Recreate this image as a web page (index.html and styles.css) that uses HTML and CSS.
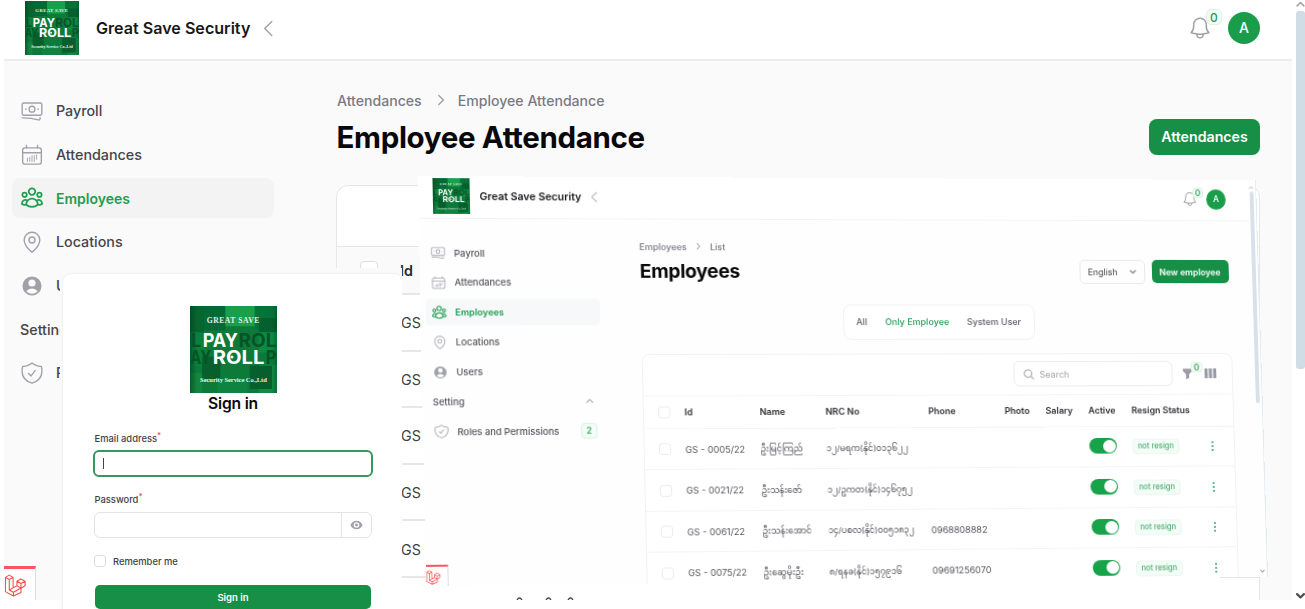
FILE: index.html
```
<!DOCTYPE html>
<html lang="en">
<head>
<meta charset="utf-8">
<title>Great Save Security</title>
<link rel="stylesheet" href="styles.css">
</head>
<body>
<svg class="defs" aria-hidden="true">
  <defs>
    <linearGradient id="edge" x1="0" x2="1" y1="0" y2="0">
      <stop offset="0" stop-color="#023f1f" stop-opacity=".6"/><stop offset=".08" stop-color="#023f1f" stop-opacity="0"/>
      <stop offset=".94" stop-color="#023f1f" stop-opacity="0"/><stop offset="1" stop-color="#023f1f" stop-opacity=".4"/>
    </linearGradient>
  </defs>
  <symbol id="logo" viewBox="0 0 86 86">
    <rect width="86" height="86" fill="#0e7a3a"/>
    <rect width="14" height="26" fill="#07652f"/><rect x="14" width="21" height="24" fill="#036a35"/>
    <rect x="35" width="29" height="20" fill="#1b9f4b"/><rect x="64" width="22" height="23" fill="#067438"/>
    <rect x="68" y="12" width="18" height="14" fill="#04602e"/><rect y="26" width="13" height="34" fill="#0b7f3c"/>
    <rect x="68" y="26" width="18" height="20" fill="#0b8a42"/><rect x="68" y="58" width="18" height="28" fill="#118b42"/>
    <rect x="12" y="50" width="18" height="22" fill="#075f2d"/><rect x="59" y="59" width="22" height="23" fill="#075f2e"/>
    <rect y="66" width="12" height="20" fill="#14853f"/><rect x="27" y="72" width="30" height="14" fill="#0f8340"/>
    <rect width="86" height="86" fill="url(#edge)"/>
    <g font-family="Inter, sans-serif" font-weight="700" font-size="19">
      <g fill="#055427"><text x="1" y="41" textLength="10" lengthAdjust="spacingAndGlyphs">L</text><text x="48" y="41" textLength="37.500" lengthAdjust="spacingAndGlyphs">ROL</text>
      <text x="0" y="57.500" textLength="21" lengthAdjust="spacingAndGlyphs">AY</text><text x="75" y="57.500" textLength="10.500" lengthAdjust="spacingAndGlyphs">P</text></g>
      <g fill="#fff"><text x="12.500" y="41" textLength="35" lengthAdjust="spacingAndGlyphs">PAY</text>
      <text x="22.500" y="57.500" textLength="51" lengthAdjust="spacingAndGlyphs">ROLL</text></g>
    </g>
    <circle cx="41.500" cy="50.500" r="1.500" fill="#fff"/>
    <g font-family="Liberation Serif, serif" font-weight="700" fill="#e3f1e6">
      <text x="16.500" y="17" font-size="7.500" textLength="52">GREAT SAVE</text>
      <text x="10" y="75.500" font-size="6.500" textLength="66">Security Service Co.,Ltd</text>
    </g>
  </symbol>
  <symbol id="cash" viewBox="0 0 24 24"><rect x="1.300" y="3.300" width="21.400" height="13.400" rx="1.600"/><circle cx="12" cy="10" r="3.200"/><path d="M5 10h.6M18.400 10h.6M1.500 19.500c6 0 12 .6 17.500 2.200 1 .3 1.800-.4 1.800-1.400v-1"/></symbol>
  <symbol id="cal" viewBox="0 0 24 24"><rect x="1.800" y="4.200" width="20.400" height="17.800" rx="2.500"/><path d="M1.800 9.500h20.400M6 1.500v2.700M18 1.500v2.700"/><path stroke-width="1" d="M7 15.500V19M9.500 14.500V19M12 13V19M14.500 12.500V19M17 12v4.500"/></symbol>
  <symbol id="group" viewBox="0 0 24 24"><circle cx="12" cy="5" r="3.600"/><circle cx="3.900" cy="8.500" r="2.400"/><circle cx="20.100" cy="8.500" r="2.400"/><path d="M5.600 19.300C5.600 15.500 8.400 12.700 12 12.700s6.400 2.800 6.400 6.600c-3.800 3-9 3-12.800 0ZM6 14.200c-2.600-.8-5 1-5 4.300 1.300.8 3 1 4.600.8M18 14.200c2.600-.8 5 1 5 4.300-1.300.8-3 1-4.600.8"/></symbol>
  <symbol id="pin" viewBox="0 0 24 24"><circle cx="12" cy="9.800" r="3.300"/><path d="M20.500 9.800C20.500 17 12 23 12 23S3.500 17 3.500 9.800a8.500 8.500 0 0 1 17 0Z"/></symbol>
  <symbol id="user" viewBox="0 0 24 24"><path fill="currentColor" stroke="none" fill-rule="evenodd" d="M12 1.600a10.400 10.400 0 1 0 0 20.800A10.400 10.400 0 0 0 12 1.600Zm0 3.200a3.900 3.900 0 1 1 0 7.800 3.900 3.900 0 0 1 0-7.800ZM5.800 18a7.500 7.500 0 0 1 12.400 0 9 9 0 0 1-12.400 0Z"/></symbol>
  <symbol id="shield" viewBox="0 0 24 24"><path d="m8.300 12.500 2.700 2.700 4.500-6M12 1.200c-3 2.600-6.300 3.700-10.200 3.600C-.2 13.500 3 20.300 12 23c9-2.700 12.200-9.500 10.200-18.200C18.300 4.900 15 3.800 12 1.200Z"/></symbol>
  <symbol id="bell" viewBox="0 0 24 24"><path d="M14.900 18.100a26 26 0 0 0 6-1.300A9 9 0 0 1 18.300 10V8.500a6.300 6.300 0 0 0-12.600 0V10a9 9 0 0 1-2.600 6.800c2 .7 4 1.100 6 1.300m5.800 0a24.300 24.300 0 0 1-5.800 0m5.800 0a3 3 0 1 1-5.800 0"/></symbol>
  <symbol id="left" viewBox="0 0 10 18"><path d="M9 1.500 1.500 9 9 16.500"/></symbol>
  <symbol id="right" viewBox="0 0 8 12"><path d="m1.800 1.500 4.600 4.500-4.600 4.500"/></symbol>
  <symbol id="up" viewBox="0 0 12 8"><path d="M1.500 6.500 6 2l4.500 4.500"/></symbol>
  <symbol id="down" viewBox="0 0 12 8"><path d="M1.500 1.500 6 6l4.500-4.500"/></symbol>
  <symbol id="laravel" viewBox="0 0 24 24"><path d="M1.500 3.500 5.500 1.200 9.500 3.500v11l4-2.300V7.500L17.500 5.200l4.500 2.300v4.800l-4.300 2.500v4.600L9.800 23l-8.300-4.600ZM1.500 3.500l4 2.300 4-2.300M5.500 5.800v10.900l4.300 2.300 7.900-4.300-4.200-2.500M9.500 14.500l-4 2.200M9.800 19v4M13.500 7.500l4.200 2.400L22 7.500M17.700 9.900v4.900"/></symbol>
</svg>

<div class="stage">
  <div class="app">
    <header class="top">
      <svg class="brand"><use href="#logo"/></svg>
      <span class="site">Great Save Security</span>
      <svg class="ic back"><use href="#left"/></svg>
      <span class="grow"></span>
      <span class="notify"><svg class="ic bell"><use href="#bell"/></svg><b class="count">0</b></span>
      <span class="avatar">A</span>
    </header>
    <div class="body">
      <nav class="side">
        <a class="item"><svg class="ic"><use href="#cash"/></svg>Payroll</a>
        <a class="item"><svg class="ic"><use href="#cal"/></svg>Attendances</a>
        <a class="item on"><svg class="ic"><use href="#group"/></svg>Employees</a>
        <a class="item"><svg class="ic"><use href="#pin"/></svg>Locations</a>
        <a class="item"><svg class="ic"><use href="#user"/></svg>Users</a>
        <a class="item head">Setting</a>
        <a class="item"><svg class="ic"><use href="#shield"/></svg>Roles</a>
      </nav>
      <main class="content">
        <div class="crumbs">Attendances<svg class="ic"><use href="#right"/></svg>Employee Attendance</div>
        <div class="titlebar"><h1>Employee Attendance</h1><button class="btn">Attendances</button></div>
        <section class="sheet">
          <div class="tools"></div>
          <div class="line hd"><i class="box"></i><span class="id">Id</span><span class="last">e</span></div>
          <div class="line"><span class="id">GS -</span></div>
          <div class="line"><span class="id">GS -</span></div>
          <div class="line"><span class="id">GS -</span></div>
          <div class="line"><span class="id">GS -</span></div>
          <div class="line"><span class="id">GS -</span></div>
          <svg class="tops" viewBox="0 0 60 3"><path d="M1 3q2.500-4 5 0M30 3q2.500-4 5 0M52 3q2.500-4 5 0"/></svg>
        </section>
      </main>
    </div>
  </div>
  <div class="track"><svg class="ic arrow"><use href="#up"/></svg><i class="thumb"></i><span class="grow"></span><svg class="ic arrow dark"><use href="#down"/></svg></div>
  <div class="debug"><svg><use href="#laravel"/></svg></div>

  <div class="login">
    <form class="card">
      <svg class="mark"><use href="#logo"/></svg>
      <h2>Sign in</h2>
      <label>Email address<sup>*</sup></label>
      <div class="field focus"><i class="caret"></i></div>
      <label>Password<sup>*</sup></label>
      <div class="field"><span class="grow"></span><span class="eye"><svg viewBox="0 0 14 10"><path fill-rule="evenodd" d="M7 .3C3.800.3 1.500 2.300.5 5c1 2.700 3.300 4.700 6.500 4.700s5.500-2 6.500-4.700C12.500 2.300 10.200.3 7 .3Zm0 1.700a3 3 0 1 1 0 6 3 3 0 0 1 0-6Z"/><circle cx="7" cy="5" r="1.600"/></svg></span></div>
      <div class="remember"><i class="box"></i>Remember me</div>
      <button class="submit" type="button">Sign in</button>
    </form>
  </div>

  <div class="app small">
    <header class="top">
      <svg class="brand"><use href="#logo"/></svg>
      <span class="site">Great Save Security</span>
      <svg class="ic back"><use href="#left"/></svg>
      <span class="grow"></span>
      <span class="notify"><svg class="ic bell"><use href="#bell"/></svg><b class="count">0</b></span>
      <span class="avatar">A</span>
    </header>
    <div class="body">
      <nav class="side">
        <a class="item"><svg class="ic"><use href="#cash"/></svg>Payroll</a>
        <a class="item"><svg class="ic"><use href="#cal"/></svg>Attendances</a>
        <a class="item on"><svg class="ic"><use href="#group"/></svg>Employees</a>
        <a class="item"><svg class="ic"><use href="#pin"/></svg>Locations</a>
        <a class="item"><svg class="ic"><use href="#user"/></svg>Users</a>
        <a class="item head">Setting<span class="grow"></span><svg class="ic fold"><use href="#up"/></svg></a>
        <a class="item">
          <svg class="ic"><use href="#shield"/></svg>Roles and Permissions<span class="grow"></span><b class="num">2</b></a>
      </nav>
      <main class="content">
        <div class="crumbs">Employees<svg class="ic"><use href="#right"/></svg>List</div>
        <div class="titlebar"><h1>Employees</h1><span class="grow"></span><span class="select">English<svg class="ic"><use href="#down"/></svg></span><button class="btn">New employee</button></div>
        <div class="tabs"><span>All</span><span class="cur">Only Employee</span><span>System User</span></div>
        <section class="sheet">
          <div class="tools">
            <span class="search"><svg class="ic" viewBox="0 0 14 14"><circle cx="6" cy="6" r="4.800"/><path d="m9.600 9.600 3.400 3.400"/></svg>Search</span>
            <span class="filter"><svg viewBox="0 0 12 13"><path d="M.8.8h10.400v2.400L7.700 7v4L4.300 12.800V7L.8 3.200Z"/></svg><b class="count">0</b></span>
            <svg class="cols" viewBox="0 0 12 10"><path d="M0 0h3.200v10H0zM4.400 0h3.200v10H4.400zM8.800 0H12v10H8.800z"/></svg>
          </div>
          <div class="row th"><i class="box"></i><span>Id</span><span>Name</span><span>NRC No</span><span>Phone</span><span>Photo</span><span>Salary</span><span>Active</span><span>Resign Status</span></div>
          <div class="row"><i class="box"></i><span>GS - 0005/22</span><span class="my">ဦးမြင့်ကြည်</span><span class="my nrc">၁၂/မရက(နိုင်)၀၁၃၆၂၂</span><span></span><span></span><span></span><i class="toggle"></i><em>not resign</em><i class="dots"></i></div>
          <div class="row"><i class="box"></i><span>GS - 0021/22</span><span class="my">ဦးသန်းဇော်</span><span class="my nrc">၁၂/ဥကတ(နိုင်)၁၄၆၇၅၂</span><span></span><span></span><span></span><i class="toggle"></i><em>not resign</em><i class="dots"></i></div>
          <div class="row"><i class="box"></i><span>GS - 0061/22</span><span class="my">ဦးသန်းအောင်</span><span class="my nrc">၁၄/ပစလ(နိုင်)၀၀၅၁၈၃၂</span><span>0968808882</span><span></span><span></span><i class="toggle"></i><em>not resign</em><i class="dots"></i></div>
          <div class="row"><i class="box"></i><span>GS - 0075/22</span><span class="my">ဦးဆွေမိုးဦး</span><span class="my nrc">၈/ရနခ(နိုင်)၁၅၇၉၁၆</span><span>09691256070</span><span></span><span></span><i class="toggle"></i><em>not resign</em><i class="dots"></i></div>
        </section>
      </main>
      <div class="track"><svg class="ic arrow"><use href="#up"/></svg><i class="thumb"></i><span class="grow"></span><svg class="ic arrow dark"><use href="#down"/></svg></div>
    </div>
    <div class="debug"><svg><use href="#laravel"/></svg></div>
  </div>
</div>
</body>
</html>
```
FILE: styles.css
```
* { box-sizing: border-box; }
body { margin: 0; background: #fff; font-family: Inter, "Noto Sans", sans-serif; overflow: hidden; }
h1, h2 { margin: 0; }
button { border: 0; font-family: inherit; }
.defs { position: absolute; width: 0; height: 0; }
.stage { position: relative; width: 1305px; height: 609px; overflow: hidden; }
.grow { flex: 1; }
.ic { fill: none; stroke: #a1a1aa; stroke-width: 1.5; stroke-linecap: round; stroke-linejoin: round; color: #a1a1aa; flex: none; overflow: visible; }

/* application frame */
.app { margin-left: 4px; width: 1288px; height: 600px; background: #fafafa; overflow: hidden; }
.top { display: flex; align-items: center; height: 61px; padding: 0 32px 3px 21px; background: #fff; border-bottom: 2px solid #ececee; }
.brand { width: 54px; height: 54px; flex: none; }
.site { margin-left: 17px; font-size: 16.1px; font-weight: 600; color: #18181b; white-space: nowrap; }
.back { width: 10px; height: 17px; margin-left: 13px; }
.notify { display: flex; position: relative; margin-right: 16px; }
.bell { width: 24px; height: 24px; }
.count { position: absolute; left: 18px; top: -6px; padding: 0 3px; height: 16px; line-height: 15px; border: 1px solid #e0f2e7; border-radius: 5px; background: #f1faf4; color: #2c9c58; font-size: 12px; font-weight: 500; }
.notify > .count { top: -7px; }
.avatar { width: 32px; height: 32px; border-radius: 50%; background: #1a9d4b; color: #fff; font-size: 14px; font-weight: 500; line-height: 32px; text-align: center; }
.body { display: flex; }
.side { flex: none; width: 270px; margin: 30px 0 0 8px; }
.item { display: flex; align-items: center; width: 262px; height: 39.7px; margin-bottom: 4px; padding-left: 9px; border-radius: 8px; font-size: 14.3px; font-weight: 500; color: #45454c; white-space: nowrap; }
.item .ic { width: 22px; height: 22px; margin-right: 13px; }
.item.head { padding-left: 8px; }
.item.on { background: #f3f3f4; color: #1f9d50; font-size: 14px; font-weight: 600; }
.item.on .ic { stroke: #1f9d50; stroke-width: 1.9; }
.content { width: 924px; margin: 29px 0 0 54px; }
.crumbs { display: flex; align-items: center; height: 20px; margin-left: 1px; font-size: 14.1px; font-weight: 500; color: #7a7a83; }
.crumbs .ic { width: 8px; height: 12px; margin: 0 13px 0 15px; }
.titlebar { display: flex; align-items: center; justify-content: space-between; margin-top: 8px; height: 38px; }
.titlebar h1 { margin-left: .5px; font-size: 29.5px; font-weight: 700; letter-spacing: -.34px; color: #09090b; }
.btn { height: 36px; width: 111px; padding: 0 0 2px; border-radius: 8px; background: #178f46; color: #fff; font-size: 14.2px; font-weight: 600; white-space: nowrap; }
.sheet { height: 450px; margin-top: 29px; border: 1px solid #e7e7e9; border-radius: 12px; background: #fff; overflow: hidden; }
.tools { height: 60px; }
.line { display: flex; align-items: center; height: 56.6px; padding: 1px 0 0 64px; border-bottom: 2px solid #e7e7e9; font-size: 14.3px; color: #3f3f46; }
.line.hd { height: 49px; padding: 0 0 0 23px; border-top: 1px solid #e7e7e9; background: #fafafa; font-weight: 600; color: #27272a; }
.box { flex: none; width: 18px; height: 18px; border: 1px solid #dedee1; border-radius: 4px; background: #fff; }
.hd .id { margin-left: 22px; }
.last { margin: 0 1px 0 auto; }
.tops { display: block; width: 60px; height: 3px; margin: 19px 0 0 179px; fill: none; stroke: #444; stroke-width: 1.3; }

.stage > .track { position: absolute; left: 1296px; top: 0; width: 9px; height: 600px; overflow: hidden; }
.track { display: flex; flex-direction: column; }
.arrow { width: 9px; height: 8px; stroke-width: 2; }
.arrow.dark { stroke: #505050; stroke-width: 3; }
.thumb { margin-top: 3px; height: 358px; border-radius: 3px; background: #d0dce6; }
.debug { position: absolute; left: 4px; top: 566px; width: 32px; height: 34px; border-top: 3px solid #fb5560; border-right: 1px solid #ddd; background: #fff; }
.debug svg { display: block; width: 23px; height: 23px; margin-top: 5px; fill: none; stroke: #fb4b46; stroke-width: 1.1; stroke-linejoin: round; }

/* sign-in window */
.login { position: absolute; left: 60px; top: 268px; width: 342px; height: 341px; padding: 6px 0 0 3px; background: #fafafa; overflow: hidden; }
.card { display: flex; flex-direction: column; height: 350px; padding: 32px 30px 0 31px; border-radius: 8px; background: #fff; box-shadow: 0 0 2px #ddd; color: #3f3f46; font-size: 9.400px; font-weight: 500; }
.mark { width: 87px; height: 87px; align-self: center; }
.card h2 { height: 21px; line-height: 21px; text-align: center; font-size: 15.700px; font-weight: 600; letter-spacing: -.2px; color: #09090b; }
.card label { height: 16px; margin-top: 17px; padding-left: .5px; line-height: 16px; }
.card sup { color: #ef4444; font-size: 8px; line-height: 0; }
.field { display: flex; height: 26px; margin-top: 4px; border: 1px solid #e4e4e7; border-radius: 6px; }
.field.focus { height: 27px; margin: 3px -1px 0; border: 2px solid #35985c; }
.caret { width: 1px; height: 11px; margin: 6px 0 0 8px; background: #444; }
.card .focus + label { margin-top: 15px; }
.eye { display: flex; align-items: center; justify-content: center; width: 30px; border-left: 1px solid #e4e4e7; }
.eye svg { width: 13px; height: 10px; fill: #a1a1aa; }
.remember { display: flex; align-items: center; gap: 7px; height: 14px; margin-top: 16px; }
.remember .box { width: 12px; height: 12px; border-radius: 3px; }
.submit { flex: none; height: 24px; margin: 17px 1px 0; border-radius: 5px; background: #178f46; color: #fff; font-size: 9.500px; font-weight: 600; }

/* employees window, seen in slight perspective */
.app.small { position: absolute; left: 418px; top: 176px; width: 840px; height: 410px; margin: 0; background: #fefefe; border-right: 1px solid #e2ebf2; transform-origin: 0 0; transform: matrix3d(1.030168, .0049173, 0, .000038842, .01941, .994784, 0, -.000012721, 0, 0, 1, 0, 0, 0, 0, 1); }
.small .ic { stroke-width: 1.400; }
.small .top { height: 43px; width: 831px; padding: 0 23px 1.500px 13.500px; border-bottom: 1.500px solid #f0f3f5; }
.small .brand { width: 36px; height: 36px; }
.small .site { margin-left: 10px; font-size: 10.400px; }
.small .back { width: 7px; height: 11px; margin-left: 8.500px; }
.small .bell { width: 16px; height: 16px; }
.small .notify { margin-right: 9.500px; }
.small .count { left: 11px; top: -4px; height: 11px; padding: 0 2px; line-height: 10px; border-radius: 3px; font-size: 9px; }
.small .avatar { width: 20px; height: 21px; line-height: 21px; font-size: 8.500px; }
.small .side { width: 173px; margin: 20.500px 0 0 5px; }
.small .item { width: 170px; height: 27px; margin-bottom: 2.900px; padding-left: 6px; border-radius: 5px; font-size: 9.200px; color: #52525b; }
.small .item .ic { width: 14px; height: 14px; margin-right: 8.500px; }
.small .item.head { padding-left: 5px; padding-right: 8px; }
.small .item .fold { width: 8px; height: 6px; margin: 0; }
.small .item.on { background: #f7f8fa; color: #1f9d50; font-size: 9px; }
.small .item.on .ic { stroke: #27a158; }
.num { width: 16px; height: 16px; margin-right: 5px; border: 1px solid #dcf3e5; border-radius: 4px; background: #f3fcf7; color: #40ac6b; font-size: 8.500px; font-weight: 600; line-height: 14px; text-align: center; }
.small .content { width: 595px; margin: 20px 0 0 37px; }
.small .crumbs { height: 14px; margin-left: 0; font-size: 9px; }
.small .crumbs .ic { width: 5px; height: 8px; margin: 0 9px 0 9px; }
.small .titlebar { margin-top: 5px; height: 26px; }
.small .titlebar h1 { margin-left: 0; font-size: 19px; letter-spacing: -.3px; }
.select { display: flex; align-items: center; justify-content: space-between; width: 67px; height: 25px; margin-right: 7px; padding: 0 8px; border: 1px solid #e9e9ec; border-radius: 5px; font-size: 8.900px; color: #3f3f46; }
.select .ic { width: 7px; height: 5px; stroke: #6b6b80; stroke-width: 2; }
.small .btn { width: 79px; height: 24.500px; margin-right: 1.500px; padding: 0; border-radius: 5px; font-size: 8.800px; }
.tabs { display: flex; align-items: center; justify-content: center; gap: 18px; width: 193px; height: 36px; margin: 20.500px 0 0 200.500px; border: 1px solid #f1f1f3; border-radius: 8px; background: #fff; font-size: 9px; font-weight: 500; color: #5f5f68; white-space: nowrap; }
.cur { color: #2b9f58; }
.small .sheet { height: 240px; margin-top: 14.500px; border-color: #f1f2f4; border-radius: 8px 8px 0 0; }
.small .tools { display: flex; align-items: center; height: 40.500px; padding-left: 369.500px; color: #a1a1aa; font-size: 9px; }
.search { display: flex; align-items: center; gap: 6px; width: 162px; height: 26px; padding-left: 9px; border: 1px solid #ececef; border-radius: 6px; }
.search .ic { width: 11px; height: 11px; }
.filter { display: flex; position: relative; margin: 0 12px 0 10.500px; }
.small .filter .count { left: 9px; top: -6px; }
.filter svg { width: 11px; height: 13px; fill: #9b9ba5; }
.cols { width: 12px; height: 10px; fill: #9b9ba5; }
.row { display: grid; grid-template-columns: 26px 74.500px 65.500px 103px 77px 41.500px 43.500px 44px 79px 10px; align-items: center; height: 41.400px; padding: .5px 0 0 14px; border-top: 1.500px solid #f3f4f6; font-size: 9.100px; color: #52525b; white-space: nowrap; }
.row.th { height: 33.500px; padding-bottom: 1px; font-size: 9px; font-weight: 600; color: #2f2f35; }
.row .box { width: 11.500px; height: 12px; border-color: #ececef; border-radius: 3px; }
.row .my { padding-top: 2px; font-family: Inter, "Noto Sans Myanmar", "Noto Sans", sans-serif; font-size: 8.400px; }
.row .nrc { font-size: 8.100px; }
.toggle { position: relative; width: 28px; height: 16px; margin: 0 0 2px -.5px; border-radius: 8px; background: #18a34a; }
.toggle::after { content: ""; position: absolute; right: 1px; top: 1.500px; width: 13px; height: 13px; border-radius: 50%; background: #fff; }
.row em { justify-self: start; height: 16px; margin-left: -.5px; padding: 0 5px; border: 1px solid #eaf8f0; border-radius: 4px; background: #f3fcf6; color: #4fae74; font-style: normal; font-size: 7.700px; font-weight: 500; line-height: 14px; }
.dots { width: 2px; height: 2px; margin-left: 2px; border-radius: 1px; background: #26a557; box-shadow: 0 -4px #26a557, 0 4px #26a557; }
.small .track { position: relative; z-index: 1; align-items: center; width: 9px; height: 410px; margin: -43px 0 0 auto; padding: 6px 0 4px; }
.small .arrow { width: 5px; height: 4px; }
.small .thumb { width: 4px; height: 219px; margin-top: 2px; background: #d6e1ea; }
.small .debug { left: 0; top: 389px; width: 22px; height: 21px; border-top-width: 2px; }
.small .debug svg { width: 15px; height: 15px; margin-top: 3px; }
```
